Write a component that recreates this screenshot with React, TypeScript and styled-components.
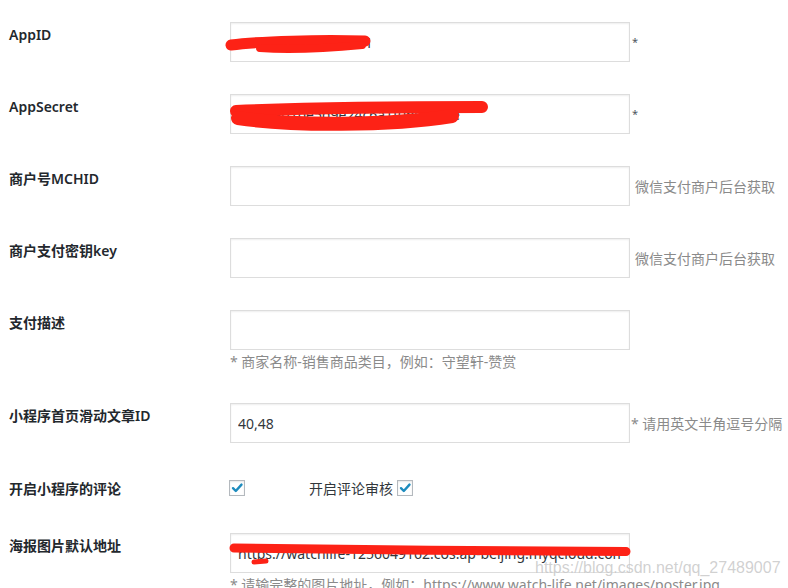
import styled, { createGlobalStyle } from 'styled-components';

const GlobalStyle = createGlobalStyle`
  html, body {
    margin: 0;
    padding: 0;
    overflow: hidden;
    background: #fff;
  }
  body {
    font-family: "Noto Sans", "Noto Sans CJK SC", sans-serif;
    color: #23282d;
  }
`;

interface TextRow {
  label: string;
  value?: string;
  star?: boolean;
  hint?: string;
  desc?: string;
  redact?: string[];
}

const Page = styled.div`
  position: relative;
  padding: 22px 0 0 9px;
`;

const Row = styled.div<{ $center?: boolean }>`
  display: flex;
  align-items: ${p => (p.$center ? 'center' : 'flex-start')};
  min-height: ${p => (p.$center ? '26px' : '0')};
  margin-bottom: 32px;

  &:last-child {
    margin-bottom: 0;
  }
`;

const Label = styled.div<{ $center?: boolean }>`
  width: 221px;
  flex-shrink: 0;
  padding-top: ${p => (p.$center ? '0' : '3px')};
  font-size: 14px;
  line-height: 19px;
  font-weight: 600;
  color: #23282d;
`;

const Field = styled.div`
  display: flex;
  flex-direction: column;
`;

const InputLine = styled.div`
  display: flex;
  align-items: center;
`;

const InputWrap = styled.div`
  position: relative;
`;

const TextInput = styled.input`
  display: block;
  width: 400px;
  height: 40px;
  box-sizing: border-box;
  margin: 0;
  padding: 0 7px;
  border: 1px solid #dddddd;
  box-shadow: inset 0 1px 2px rgba(0, 0, 0, 0.07);
  background: #fff;
  font-family: "Noto Sans", "Noto Sans CJK SC", sans-serif;
  font-size: 14px;
  color: #32373c;
  outline: none;
`;

const Redact = styled.svg`
  position: absolute;
  left: 0;
  top: 0;
  width: 400px;
  height: 40px;
  overflow: visible;
  pointer-events: none;

  path {
    fill: none;
    stroke: #fd2216;
    stroke-linecap: round;
    stroke-linejoin: round;
  }
`;

const Star = styled.span`
  margin: 0 0 2px 2px;
  font-size: 11px;
  color: #50575e;
`;

const Hint = styled.span<{ $tight?: boolean }>`
  margin-left: ${p => (p.$tight ? '1px' : '5px')};
  font-size: 14px;
  line-height: 19px;
  color: #8a8a8a;
`;

const Desc = styled.div`
  margin-top: 2px;
  font-size: 14px;
  line-height: 19px;
  color: #8a8a8a;
  white-space: nowrap;
`;

const CheckGroup = styled.div`
  display: flex;
  align-items: center;
`;

const CheckText = styled.span`
  margin: 0 4px 0 64px;
  font-size: 14px;
  line-height: 19px;
  color: #32373c;
`;

const Box = styled.span<{ $first?: boolean }>`
  display: inline-flex;
  width: 16px;
  height: 16px;
  box-sizing: border-box;
  margin-left: ${p => (p.$first ? '-1px' : '0')};
  border: 1px solid #b4b9be;
  background: #fff;
  box-shadow: inset 0 1px 2px rgba(0, 0, 0, 0.1);
`;

const Watermark = styled.div`
  position: absolute;
  left: 535px;
  top: 559px;
  font-family: "Liberation Sans", Arial, sans-serif;
  font-size: 16px;
  line-height: 18px;
  color: rgba(170, 170, 170, 0.55);
  text-shadow: 0 0 1px rgba(255, 255, 255, 0.8);
  white-space: nowrap;
  pointer-events: none;
`;

const Checkbox = ({ first }: { first?: boolean }) => (
  <Box $first={first}>
    <svg width='14' height='14' viewBox='0 0 14 14'>
      <path d='M3 7.2 L5.8 10 L11.5 3.6' fill='none' stroke='#1e8cbe' strokeWidth='2.4' strokeLinecap='round' strokeLinejoin='round' />
    </svg>
  </Box>
);

const rows: TextRow[] = [
  {
    label: 'AppID',
    value: 'wx7503000102cd8f1',
    star: true,
    redact: ['M1 23 C 30 19, 90 18, 135 19|11', 'M30 26 C 60 28, 100 26, 132 23|8'],
  },
  {
    label: 'AppSecret',
    value: '8f3c1a07be5d9e24c6a1f0b9c5c6e',
    star: true,
    redact: ['M6 17 C 80 14, 180 13, 252 13|12', 'M8 24 C 60 32, 160 32, 222 22|14'],
  },
  { label: '商户号MCHID', value: '', hint: '微信支付商户后台获取' },
  { label: '商户支付密钥key', value: '', hint: '微信支付商户后台获取' },
  { label: '支付描述', value: '', desc: '* 商家名称-销售商品类目，例如：守望轩-赞赏' },
  { label: '小程序首页滑动文章ID', value: '40,48', hint: '* 请用英文半角逗号分隔' },
];

const posterRedact = ['M4 15 C 100 17, 300 18, 396 18.5|9', 'M24 29 L 36 28|5'];

const RedactMarks = ({ marks }: { marks: string[] }) => (
  <Redact viewBox='0 0 400 40'>
    {marks.map(m => {
      const [d, w] = m.split('|');
      return <path key={d} d={d} strokeWidth={w} />;
    })}
  </Redact>
);

const App = () => {
  return (
    <Page>
      <GlobalStyle />
      {rows.map(row => (
        <Row key={row.label}>
          <Label>{row.label}</Label>
          <Field>
            <InputLine>
              <InputWrap>
                <TextInput readOnly value={row.value} />
                {row.redact && <RedactMarks marks={row.redact} />}
              </InputWrap>
              {row.star && <Star>*</Star>}
              {row.hint && <Hint $tight={row.hint.startsWith('*')}>{row.hint}</Hint>}
            </InputLine>
            {row.desc && <Desc>{row.desc}</Desc>}
          </Field>
        </Row>
      ))}
      <Row $center>
        <Label $center>开启小程序的评论</Label>
        <CheckGroup>
          <Checkbox first />
          <CheckText>开启评论审核</CheckText>
          <Checkbox />
        </CheckGroup>
      </Row>
      <Row>
        <Label>海报图片默认地址</Label>
        <Field>
          <InputWrap>
            <TextInput readOnly value='https://watchlife-1256049162.cos.ap-beijing.myqcloud.com/poster' />
            <RedactMarks marks={posterRedact} />
          </InputWrap>
          <Desc>* 请输完整的图片地址，例如：https://www.watch-life.net/images/poster.jpg</Desc>
        </Field>
      </Row>
      <Watermark>https://blog.csdn.net/qq_27489007</Watermark>
    </Page>
  );
};

export default App;
